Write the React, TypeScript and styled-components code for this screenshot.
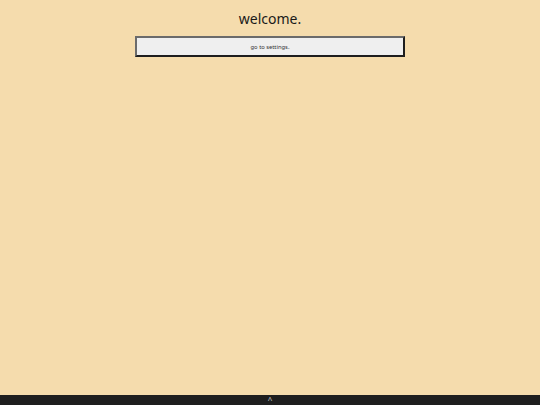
import styled, { createGlobalStyle } from "styled-components";

const Global = createGlobalStyle`
  html, body {
    margin: 0;
    height: 100%;
    background-color: #f5dcad;
    font-family: "Noto Sans", "Open Sans", sans-serif;
  }
  #root {
    height: 100%;
  }
`;

const Page = styled.div`
  height: 100vh;
  display: flex;
  flex-direction: column;
`;
const Main = styled.main`
  flex: 1;
  display: flex;
  flex-direction: column;
  align-items: center;
  padding-top: 9px;
`;
const Title = styled.h1`
  margin: 0;
  font-size: 14px;
  font-weight: 400;
  line-height: 20px;
  color: #1a1a1a;
`;
const SettingsButton = styled.button`
  margin-top: 7px;
  width: 270px;
  height: 21px;
  background: #efefef;
  border-style: solid;
  border-width: 2px;
  border-color: #6b6b6b #1e1e1e #1e1e1e #6b6b6b;
  font-family: "Noto Sans", sans-serif;
  font-size: 5.8px;
  color: #333;
  padding: 0;
  cursor: pointer;
`;
const BottomBar = styled.footer`
  height: 10px;
  background: #1e1e1e;
  color: #cfcfcf;
  display: flex;
  justify-content: center;
  align-items: center;
  font-size: 8px;
  line-height: 10px;
`;

function App() {
  return (
    <Page>
      <Global />
      <Main>
        <Title>welcome.</Title>
        <SettingsButton>go to settings.</SettingsButton>
      </Main>
      <BottomBar>^</BottomBar>
    </Page>
  );
}
export default App;
